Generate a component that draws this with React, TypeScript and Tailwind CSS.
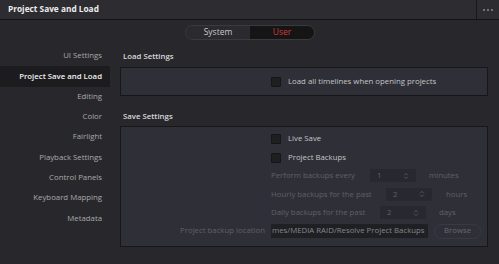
import React from "react";

const sidebarItems = [
  "UI Settings",
  "Project Save and Load",
  "Editing",
  "Color",
  "Fairlight",
  "Playback Settings",
  "Control Panels",
  "Keyboard Mapping",
  "Metadata",
];

function Checkbox() {
  return <span className="block h-[10px] w-[10px] shrink-0 rounded-[1px] border border-[#151517] bg-[#1f1f21]" />;
}

function Spinner({ value, width }: { value: string; width: string }) {
  return (
    <div className={`flex h-[13px] items-center justify-between bg-[#282930] px-[7px] ${width}`}>
      <span className="text-[#5e6068]">{value}</span>
      <svg viewBox="0 0 8 10" className="h-[8px] w-[6px]" aria-hidden>
        <path d="M1.5 4L4 1.5L6.5 4M1.5 6L4 8.5L6.5 6" fill="none" stroke="#5e6068" strokeWidth="1" />
      </svg>
    </div>
  );
}

export default function App() {
  return (
    <div
      className="flex h-[264px] w-[499px] flex-col overflow-hidden whitespace-nowrap bg-[#28282c] text-[7.8px] text-[#c4c4c6]"
      style={{ fontFamily: '"Open Sans", "Noto Sans", sans-serif' }}
    >
      <div className="flex h-[20px] shrink-0 items-stretch border-b border-[#141416] bg-[#2c2c31]">
        <div className="flex flex-1 items-center pl-[8px] text-[8.3px] font-bold text-[#ececec]">
          Project Save and Load
        </div>
        <div className="flex w-[23px] items-center justify-center gap-[2px] border-l border-[#18181a]">
          <span className="h-[2px] w-[2px] rounded-full bg-[#8a8a8e]" />
          <span className="h-[2px] w-[2px] rounded-full bg-[#8a8a8e]" />
          <span className="h-[2px] w-[2px] rounded-full bg-[#8a8a8e]" />
        </div>
      </div>

      <div className="flex justify-center pt-[5px] pb-[6px] pl-[1px]">
        <div className="flex h-[15px] w-[130px] overflow-hidden rounded-full border border-[#3a3a3f] text-[8.5px]">
          <div className="flex flex-1 items-center justify-center bg-[#2a2a2f] text-[#c8c8ca]">System</div>
          <div className="flex flex-1 items-center justify-center bg-[#151516] text-[#d13a3a]">User</div>
        </div>
      </div>

      <div className="flex flex-1">
        <div className="w-[110px] shrink-0">
          {sidebarItems.map((item, i) => (
            <div
              key={item}
              className={`flex h-[20.3px] items-center justify-end pr-[8px] ${
                i === 1 ? "bg-[#1c1c1e] font-semibold text-[#f0f0f0]" : "text-[#a8a8ab]"
              }`}
            >
              {item}
            </div>
          ))}
        </div>

        <div className="flex flex-1 flex-col pl-[10px] pr-[11px]">
          <div className="flex h-[21px] items-center pl-[3px] font-semibold text-[#d8d8da]">Load Settings</div>
          <div className="grid h-[29px] grid-cols-[150px_1fr] items-center border border-[#17171a] bg-[#2f3037]">
            <div />
            <div className="flex items-center gap-[7px]">
              <Checkbox />
              <span>Load all timelines when opening projects</span>
            </div>
          </div>

          <div className="flex h-[30px] items-end pb-[3px] pl-[3px] font-semibold text-[#d8d8da]">Save Settings</div>
          <div className="grid grid-cols-[150px_1fr] grid-rows-[repeat(6,18.4px)] items-center border border-[#17171a] bg-[#2f3037] pt-[3px] pb-[6px]">
            <div />
            <div className="flex items-center gap-[7px]">
              <Checkbox />
              <span>Live Save</span>
            </div>
            <div />
            <div className="flex items-center gap-[7px]">
              <Checkbox />
              <span>Project Backups</span>
            </div>
            <div />
            <div className="flex items-center text-[#5e6068]">
              <span className="w-[99px]">Perform backups every</span>
              <Spinner value="1" width="w-[46px]" />
              <span className="ml-[13px]">minutes</span>
            </div>
            <div />
            <div className="flex items-center text-[#5e6068]">
              <span className="w-[115px]">Hourly backups for the past</span>
              <Spinner value="2" width="w-[46px]" />
              <span className="ml-[14px]">hours</span>
            </div>
            <div />
            <div className="flex items-center text-[#5e6068]">
              <span className="w-[109px]">Daily backups for the past</span>
              <Spinner value="2" width="w-[46px]" />
              <span className="ml-[13px]">days</span>
            </div>
            <div className="pr-[6px] text-right text-[#5e6068]">Project backup location</div>
            <div className="flex items-center">
              <div className="flex h-[14px] w-[157px] items-center overflow-hidden bg-[#1f2023] px-[1px] text-[#85868b]">
                mes/MEDIA RAID/Resolve Project Backups
              </div>
              <div className="ml-[6px] flex h-[15px] w-[47px] items-center justify-center rounded-full border border-[#393a41] text-[#66686f]">
                Browse
              </div>
            </div>
          </div>
        </div>
      </div>
    </div>
  );
}
